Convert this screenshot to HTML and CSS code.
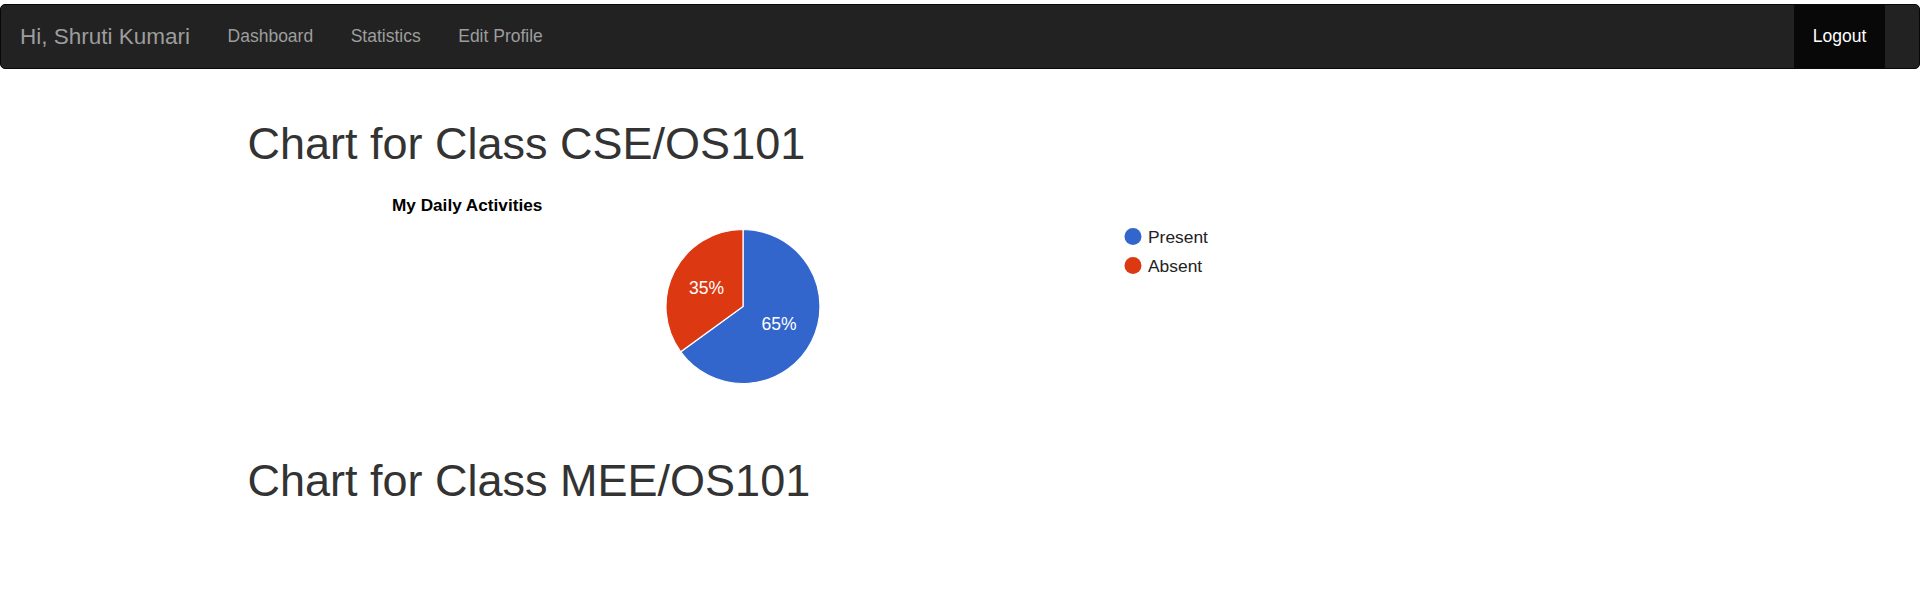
FILE: index.html
```html
<!DOCTYPE html>
<html lang="en">
<head>
<meta charset="utf-8">
<title>Statistics</title>
<link rel="stylesheet" href="styles.css">
</head>
<body>
<nav class="navbar">
  <a class="brand" href="#">Hi, Shruti Kumari</a>
  <ul class="nav">
    <li><a href="#">Dashboard</a></li>
    <li><a href="#">Statistics</a></li>
    <li><a href="#">Edit Profile</a></li>
  </ul>
  <ul class="nav nav-right">
    <li class="active"><a href="#">Logout</a></li>
  </ul>
</nav>
<main class="container">
  <h1 class="chart-heading">Chart for Class CSE/OS101</h1>
  <div class="chart">
    <svg width="1000" height="250" viewBox="0 0 1000 250" xmlns="http://www.w3.org/2000/svg">
      <text class="chart-title" x="144" y="29.5">My Daily Activities</text>
      <path d="M495 125.5 L495 48.5 A77 77 0 1 1 432.7 170.8 Z" fill="#3366cc" stroke="#ffffff" stroke-width="1.2"/>
      <path d="M495 125.5 L432.7 170.8 A77 77 0 0 1 495 48.5 Z" fill="#dc3912" stroke="#ffffff" stroke-width="1.2"/>
      <text class="slice-label" x="458.5" y="112.5" text-anchor="middle">35%</text>
      <text class="slice-label" x="531" y="148.5" text-anchor="middle">65%</text>
      <circle cx="885" cy="55.5" r="8.5" fill="#3366cc"/>
      <text class="legend-label" x="900" y="61.5">Present</text>
      <circle cx="885" cy="84.5" r="8.5" fill="#dc3912"/>
      <text class="legend-label" x="900" y="90.5">Absent</text>
    </svg>
  </div>
  <h1 class="chart-heading">Chart for Class MEE/OS101</h1>
</main>
</body>
</html>
```
FILE: styles.css
```css
html, body {
  margin: 0;
  padding: 0;
  background: #ffffff;
}
body {
  font-family: "Liberation Sans", Arial, Helvetica, sans-serif;
  font-size: 17.5px;
  line-height: 1.42857;
  color: #333333;
}
.navbar {
  display: flex;
  align-items: stretch;
  margin-top: 4px;
  margin-bottom: 25px;
  height: 65px;
  box-sizing: border-box;
  background: #222222;
  border: 1.25px solid #080808;
  border-radius: 5px;
  padding-right: 34px;
}
.brand {
  display: flex;
  align-items: center;
  padding: 0 18.75px 0 19px;
  font-size: 22.5px;
  line-height: 25px;
  color: #9d9d9d;
  text-decoration: none;
}
.nav {
  display: flex;
  margin: 0;
  padding: 0;
  list-style: none;
}
.nav li {
  display: flex;
}
.nav a {
  display: flex;
  align-items: center;
  padding: 0 18.75px;
  line-height: 25px;
  color: #9d9d9d;
  text-decoration: none;
}
.nav-right {
  margin-left: auto;
}
.nav .active a {
  background: #080808;
  color: #ffffff;
}
.container {
  display: flow-root;
  width: 1462.5px;
  box-sizing: border-box;
  margin: 0 auto;
  padding: 0 18.75px;
}
.chart-heading {
  margin: 25px 0 12.5px;
  font-size: 45px;
  font-weight: 500;
  line-height: 1.1;
  color: #333333;
}
.chart {
  height: 250px;
}
.chart svg {
  display: block;
}
.chart-title {
  font-family: "Liberation Sans", Arial, sans-serif;
  font-size: 17.2px;
  font-weight: bold;
  fill: #000000;
}
.slice-label {
  font-family: "Liberation Sans", Arial, sans-serif;
  font-size: 17.5px;
  fill: #ffffff;
}
.legend-label {
  font-family: "Liberation Sans", Arial, sans-serif;
  font-size: 17.4px;
  fill: #222222;
}
```
